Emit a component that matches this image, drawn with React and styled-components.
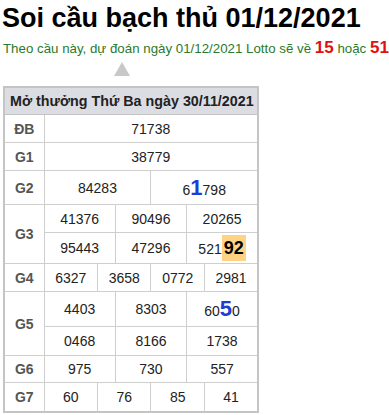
import React from "react";
import styled, { createGlobalStyle } from "styled-components";

const Global = createGlobalStyle`
  body {
    margin: 0;
    background: #fff;
    font-family: "Liberation Sans", Arial, sans-serif;
  }
`;

const Page = styled.div`
  padding: 0 0 0 2px;
`;

const Title = styled.h1`
  margin: 0;
  padding-top: 3px;
  font-size: 27px;
  line-height: 30px;
  font-weight: bold;
  color: #000;
  white-space: nowrap;
`;

const Predict = styled.p`
  margin: 5px 0 0 1px;
  font-size: 13.3px;
  line-height: 20px;
  color: #2a7a2a;
  white-space: nowrap;
`;

const Hit = styled.b`
  color: #e01010;
  font-size: 17px;
`;

const Arrow = styled.div`
  width: 0;
  height: 0;
  margin: 3px 0 0 112px;
  border-left: 8px solid transparent;
  border-right: 8px solid transparent;
  border-bottom: 14px solid #c8c8c8;
`;

const Table = styled.table`
  margin: 10px 0 0 1px;
  width: 256px;
  border-collapse: collapse;
  table-layout: fixed;
  border: 2px solid #c4c4c4;
  font-size: 14px;
  color: #222;
`;

const Head = styled.th`
  background: #dcdde3;
  height: 26px;
  padding: 0 0 0 5px;
  text-align: left;
  font-size: 14.3px;
  color: #222;
  border-bottom: 1px solid #c4c4c4;
  white-space: nowrap;
`;

const Row = styled.tr`
  height: ${(p) => p.$h}px;
`;

const Label = styled.td`
  border: 1px solid #cfcfcf;
  text-align: center;
  font-weight: bold;
  color: #555;
`;

const Cell = styled.td`
  border: 1px solid #cfcfcf;
  text-align: center;
  padding: 0;
`;

const Big = styled.b`
  color: #1b3fd6;
  font-size: 22px;
  line-height: 20px;
`;

const Mark = styled.b`
  background: #ffd383;
  font-size: 18px;
  padding: 3px 2px;
  color: #000;
`;

const rows = [
  { label: "ĐB", h: 28, cells: [["71738"]] },
  { label: "G1", h: 28, cells: [["38779"]] },
  { label: "G2", h: 34, cells: [["84283"], ["6", { big: "1" }, "798"]] },
  {
    label: "G3",
    span: 2,
    h: 28,
    cells: [["41376"], ["90496"], ["20265"]],
  },
  { h: 31, cells: [["95443"], ["47296"], ["521", { mark: "92" }]] },
  { label: "G4", h: 28, cells: [["6327"], ["3658"], ["0772"], ["2981"]] },
  {
    label: "G5",
    span: 2,
    h: 35,
    cells: [["4403"], ["8303"], ["60", { big: "5" }, "0"]],
  },
  { h: 29, cells: [["0468"], ["8166"], ["1738"]] },
  { label: "G6", h: 27, cells: [["975"], ["730"], ["557"]] },
  { label: "G7", h: 29, cells: [["60"], ["76"], ["85"], ["41"]] },
];

const renderPart = (part, i) => {
  if (typeof part === "string") return <span key={i}>{part}</span>;
  if (part.big) return <Big key={i}>{part.big}</Big>;
  return <Mark key={i}>{part.mark}</Mark>;
};

export default function App() {
  return (
    <Page>
      <Global />
      <Title>Soi cầu bạch thủ 01/12/2021</Title>
      <Predict>
        Theo cầu này, dự đoán ngày 01/12/2021 Lotto sẽ về <Hit>15</Hit> hoặc{" "}
        <Hit>51</Hit>
      </Predict>
      <Arrow />
      <Table>
        <colgroup>
          <col style={{ width: 40 }} />
          {Array.from({ length: 12 }).map((_, i) => (
            <col key={i} />
          ))}
        </colgroup>
        <thead>
          <tr>
            <Head colSpan={13}>Mở thưởng Thứ Ba ngày 30/11/2021</Head>
          </tr>
        </thead>
        <tbody>
          {rows.map((r, i) => (
            <Row key={i} $h={r.h}>
              {r.label && <Label rowSpan={r.span || 1}>{r.label}</Label>}
              {r.cells.map((c, j) => (
                <Cell key={j} colSpan={12 / r.cells.length}>
                  {c.map(renderPart)}
                </Cell>
              ))}
            </Row>
          ))}
        </tbody>
      </Table>
    </Page>
  );
}
